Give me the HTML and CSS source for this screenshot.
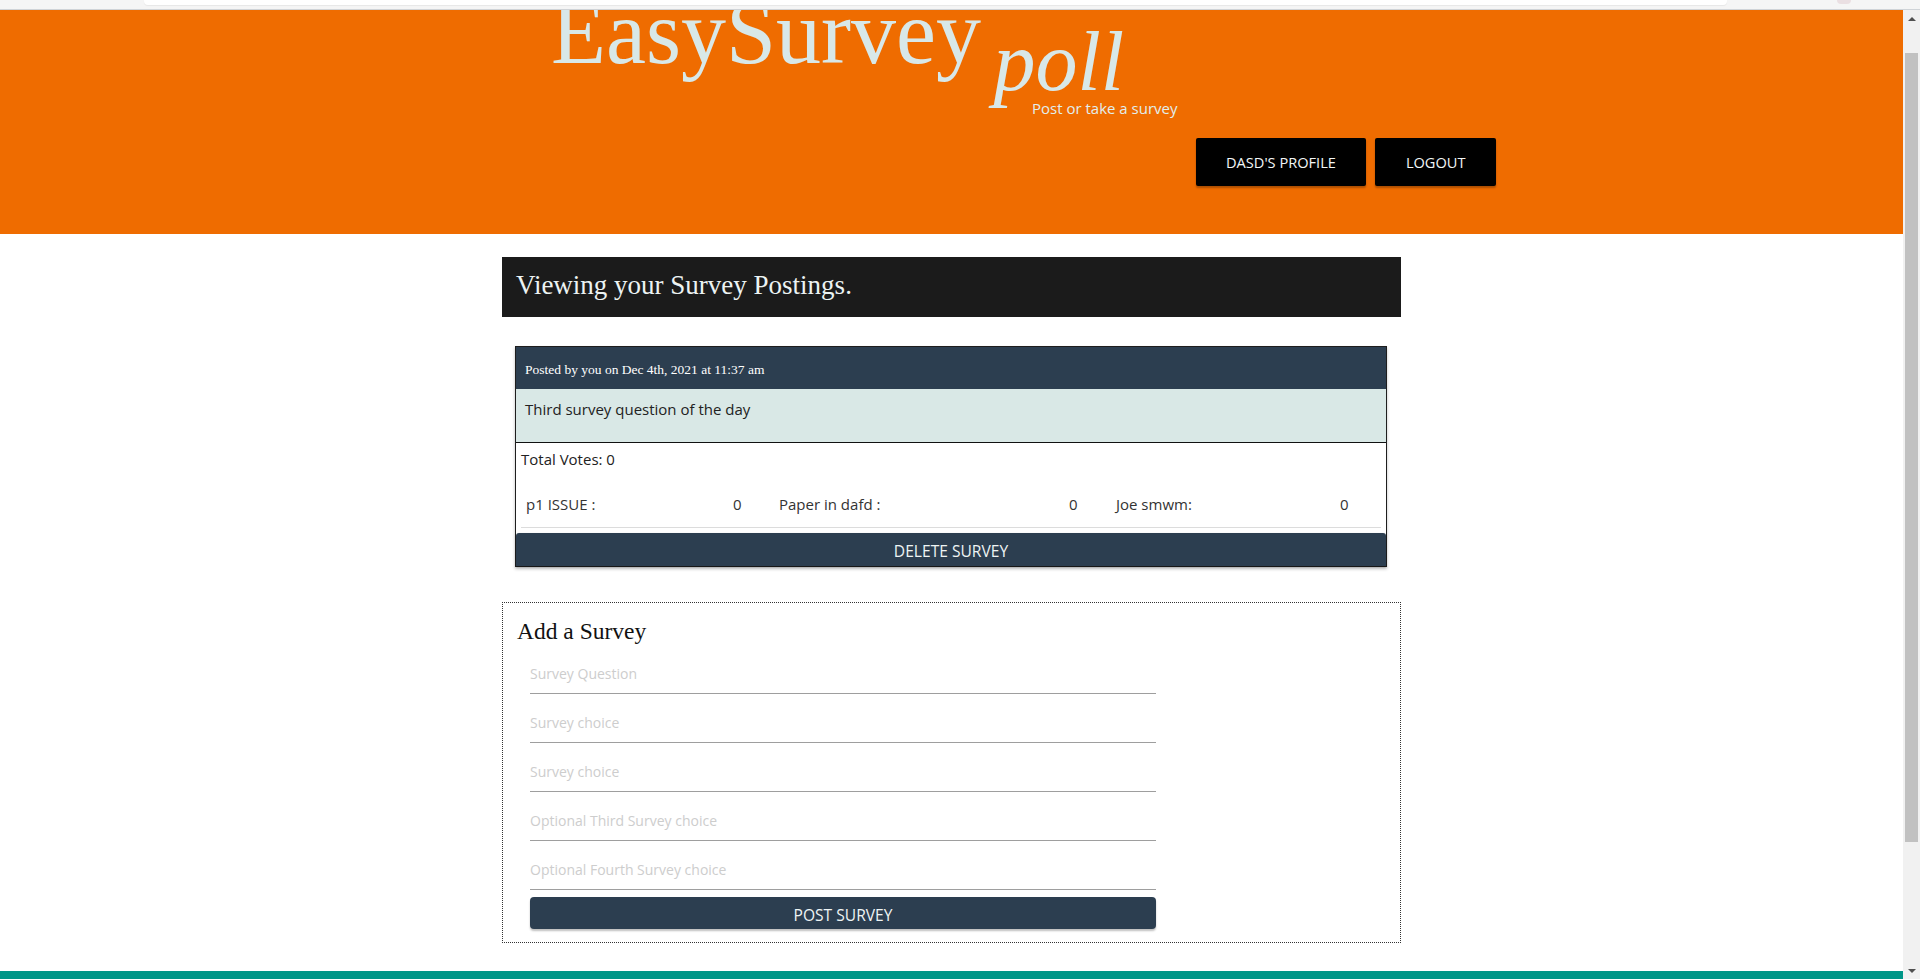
FILE: index.html
```html
<!DOCTYPE html>
<html lang="en">
<head>
<meta charset="utf-8">
<title>EasySurvey poll</title>
<link rel="stylesheet" href="styles.css">
</head>
<body>
<div class="chrome">
  <div class="chrome-tab"></div>
  <div class="chrome-dot"></div>
</div>
<div class="viewport">
  <div class="page">
    <header class="hero">
      <div class="hero-inner">
        <h1 class="brand">EasySurvey <span class="brand-sub">poll</span></h1>
        <p class="tagline">Post or take a survey</p>
        <nav class="hero-actions">
          <a class="btn-dark" href="#">DASD'S PROFILE</a>
          <a class="btn-dark" href="#">LOGOUT</a>
        </nav>
      </div>
    </header>
    <main class="container">
      <h2 class="section-bar">Viewing your Survey Postings.</h2>
      <div class="survey-card">
        <div class="card-head">Posted by you on Dec 4th, 2021 at 11:37 am</div>
        <div class="card-question">Third survey question of the day</div>
        <div class="card-body">
          <div class="total">Total Votes: 0</div>
          <div class="choices">
            <span class="cell">p1 ISSUE :</span><span class="cell">0</span>
            <span class="cell">Paper in dafd :</span><span class="cell">0</span>
            <span class="cell">Joe smwm:</span><span class="cell">0</span>
          </div>
          <button class="btn-delete" type="button">DELETE SURVEY</button>
        </div>
      </div>
      <form class="add-form">
        <h3 class="add-title">Add a Survey</h3>
        <div class="fields">
          <input class="field" type="text" placeholder="Survey Question">
          <input class="field" type="text" placeholder="Survey choice">
          <input class="field" type="text" placeholder="Survey choice">
          <input class="field" type="text" placeholder="Optional Third Survey choice">
          <input class="field" type="text" placeholder="Optional Fourth Survey choice">
          <button class="btn-post" type="button">POST SURVEY</button>
        </div>
      </form>
    </main>
    <footer class="footer"></footer>
  </div>
  <div class="scrollbar">
    <div class="sb-arrow sb-up"></div>
    <div class="sb-track"><div class="sb-thumb"></div></div>
    <div class="sb-arrow sb-down"></div>
  </div>
</div>
</body>
</html>
```

FILE: styles.css
```css
* { box-sizing: border-box; }

html, body {
  margin: 0;
  padding: 0;
}

body {
  height: 100vh;
  overflow: hidden;
  display: flex;
  flex-direction: column;
  background: #ffffff;
  font-family: "Open Sans", "Liberation Sans", sans-serif;
  font-size: 15px;
  line-height: 21px;
  color: #222;
}

/* top strip */
.chrome {
  height: 10px;
  flex: 0 0 10px;
  background: #f5f5f5;
  border-bottom: 1px solid #cfd3d7;
  display: flex;
  padding-left: 144px;
}
.chrome-tab {
  width: 1583px;
  height: 5px;
  background: #ffffff;
  border-radius: 0 0 4px 4px;
  box-shadow: 0 1px 1px rgba(0,0,0,0.06);
}
.chrome-dot {
  width: 14px;
  height: 4px;
  margin-left: 110px;
  border-radius: 0 0 7px 7px;
  background: #eadfe2;
}

.viewport {
  flex: 1;
  min-height: 0;
  display: flex;
}

.page {
  flex: 1;
  min-width: 0;
  overflow: hidden;
}

/* hero */
.hero {
  background: #ef6c00;
  overflow: hidden;
  padding-bottom: 48px;
}
.hero-inner {
  width: 1089px;
  margin: 0 auto;
}
.brand {
  margin: -22px 0 0 0;
  padding-left: 144px;
  height: 90px;
  font-family: "Liberation Serif", "Times New Roman", serif;
  font-weight: normal;
  font-size: 90px;
  line-height: 90px;
  color: #d8e8e8;
  white-space: nowrap;
}
.brand-sub {
  font-style: italic;
  font-size: 84px;
  margin-left: -10px;
  vertical-align: -27px;
}
.tagline {
  margin: 20px 0 0 0;
  padding-left: 625px;
  font-size: 15px;
  line-height: 20px;
  color: #e2efee;
}
.hero-actions {
  margin-top: 20px;
  display: flex;
  justify-content: flex-end;
  gap: 9px;
}
.btn-dark {
  display: block;
  height: 48px;
  line-height: 48px;
  padding: 0 30.5px;
  background: #000;
  color: #f2f7f7;
  font-size: 14.6px;
  text-decoration: none;
  border-radius: 2px;
  box-shadow: 0 2px 2px rgba(0,0,0,0.28);
}

/* main */
.container {
  width: 899px;
  margin: 23px auto 28px;
}
.section-bar {
  margin: 0;
  height: 60px;
  padding-left: 14px;
  background: #1b1b1b;
  color: #ecf3f3;
  font-family: "Liberation Serif", "Times New Roman", serif;
  font-weight: normal;
  font-size: 27px;
  line-height: 56px;
}

.survey-card {
  margin: 29px 14px 0 13px;
  border: 1px solid #1e1e1e;
  box-shadow: 0 2px 3px rgba(0,0,0,0.25);
}
.card-head {
  height: 42px;
  padding: 14px 9px 0;
  background: #2c3e50;
  color: #ffffff;
  font-family: "Liberation Serif", "Times New Roman", serif;
  font-size: 13.5px;
  line-height: 17px;
}
.card-question {
  height: 54px;
  padding: 10px 9px 0;
  background: #d9e8e6;
  border-bottom: 1px solid #111;
  color: #222;
}
.card-body {
  padding-top: 6px;
}
.total {
  padding-left: 5px;
  color: #222;
}
.choices {
  margin: 12px 5px 0;
  display: grid;
  grid-template-columns: 207px 46px 290px 47px 224px 47px;
  border-bottom: 1px solid #dcdcdc;
}
.cell {
  padding: 12px 5px;
  color: #333;
}
.btn-delete {
  display: block;
  width: 100%;
  margin-top: 5px;
  height: 33px;
  padding: 4px 0 0;
  border: none;
  border-radius: 3px 3px 0 0;
  background: #2c3e50;
  color: #eef4f4;
  font-family: "Open Sans", "Liberation Sans", sans-serif;
  font-size: 15.6px;
  line-height: 29px;
  box-shadow: 0 1px 2px rgba(0,0,0,0.3);
}

/* add form */
.add-form {
  margin-top: 35px;
  border: 1px dotted #333;
  padding-bottom: 13px;
}
.add-title {
  margin: 0 0 1px;
  padding: 15px 0 0 14px;
  font-family: "Liberation Serif", "Times New Roman", serif;
  font-weight: normal;
  font-size: 23.5px;
  line-height: 26px;
  color: #111;
}
.fields {
  margin-left: 27px;
  width: 626px;
  display: flex;
  flex-direction: column;
}
.field {
  display: block;
  width: 100%;
  height: 49px;
  padding: 8px 0 0;
  border: none;
  border-bottom: 1px solid #9e9e9e;
  outline: none;
  background: transparent;
  font-family: "Open Sans", "Liberation Sans", sans-serif;
  font-size: 14px;
  color: #222;
}
.field::placeholder {
  color: #cdcdcd;
}
.btn-post {
  display: block;
  width: 100%;
  height: 32px;
  margin-top: 7px;
  padding: 5px 0 0;
  border: none;
  border-radius: 4px;
  background: #2c3e50;
  color: #eef4f4;
  font-family: "Open Sans", "Liberation Sans", sans-serif;
  font-size: 15.6px;
  line-height: 27px;
  box-shadow: 0 2px 2px rgba(0,0,0,0.25);
}

.footer {
  height: 60px;
  background: #009688;
}

/* scrollbar */
.scrollbar {
  flex: 0 0 17px;
  width: 17px;
  background: #f1f1f1;
  display: flex;
  flex-direction: column;
}
.sb-arrow {
  height: 17px;
  flex: 0 0 17px;
  display: flex;
  align-items: center;
  justify-content: center;
}
.sb-up::before {
  content: "";
  border-left: 4px solid transparent;
  border-right: 4px solid transparent;
  border-bottom: 4px solid #505050;
}
.sb-down::before {
  content: "";
  border-left: 4px solid transparent;
  border-right: 4px solid transparent;
  border-top: 4px solid #505050;
}
.sb-track {
  flex: 1;
  padding: 26px 2px 0;
}
.sb-thumb {
  height: 789px;
  background: #c1c1c1;
}
```
